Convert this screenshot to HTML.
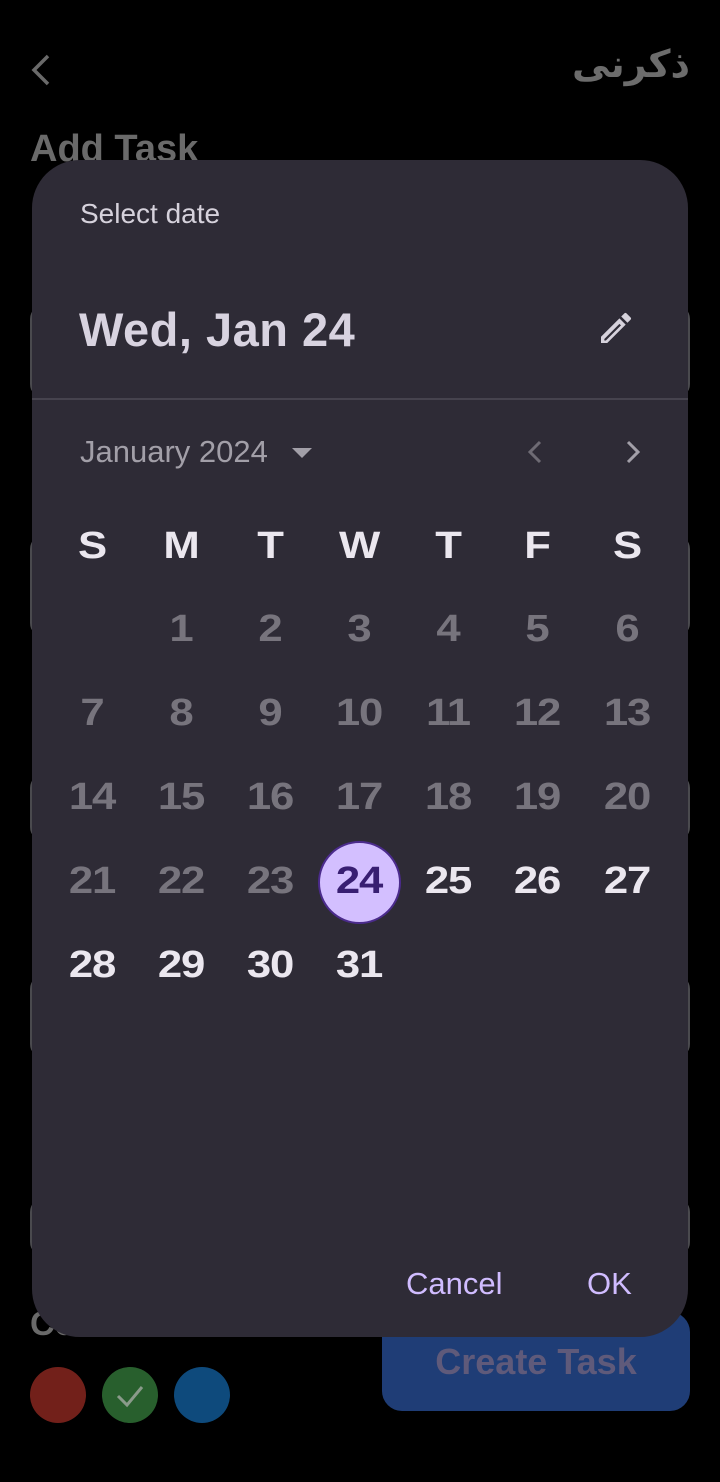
<!DOCTYPE html>
<html><head><meta charset="utf-8"><style>
*{margin:0;padding:0;box-sizing:border-box}
body{width:720px;height:1482px;background:#000;position:relative;overflow:hidden;font-family:"Liberation Sans",sans-serif}
.a{position:absolute}
.fld{position:absolute;left:30px;width:660px;border:2px solid #4a4a4e;border-radius:14px}
.dlg{position:absolute;left:32px;top:160px;width:656px;height:1177px;background:#2e2b36;border-radius:48px;overflow:hidden}
.n{position:absolute;width:90px;text-align:center;font-weight:900;font-size:38px;line-height:40px;letter-spacing:-1px;transform:scaleX(1.15)}
.g{color:#77747d}.w{color:#ebe7ef}
</style></head><body>
<svg class="a" style="left:26px;top:52px" width="28" height="36" viewBox="0 0 28 36"><path d="M22 4 L8 18 L22 32" stroke="#6a6a6a" stroke-width="3.5" fill="none"/></svg>
<div class="a" style="right:30px;top:42px;font-size:38px;font-weight:bold;color:#6c6c6c;font-family:'DejaVu Sans',sans-serif" dir="rtl">ذكرنى</div>
<div class="a" style="left:30px;top:128px;font-size:38px;font-weight:bold;color:#6a6a6a">Add Task</div>
<div class="fld" style="top:305px;height:93px"></div>
<div class="fld" style="top:535px;height:102px"></div>
<div class="fld" style="top:774px;height:67px"></div>
<div class="fld" style="top:975px;height:83px"></div>
<div class="fld" style="top:1198px;height:58px"></div>
<div class="a" style="left:30px;top:1305px;font-size:34px;font-weight:bold;color:#6a6a6a">Color</div>
<div class="a" style="left:30px;top:1367px;width:56px;height:56px;border-radius:50%;background:#72201a"></div>
<div class="a" style="left:102px;top:1367px;width:56px;height:56px;border-radius:50%;background:#285f2d"><svg width="56" height="56"><path d="M16 29 L25 38 L40 20" stroke="#8a9a8a" stroke-width="3" fill="none"/></svg></div>
<div class="a" style="left:174px;top:1367px;width:56px;height:56px;border-radius:50%;background:#0e4a7c"></div>
<div class="a" style="left:382px;top:1312px;width:308px;height:99px;border-radius:20px;background:#1f3d76;color:#5f5a7a;font-size:36px;font-weight:bold;text-align:center;line-height:99px">Create Task</div>

<div class="dlg">
<div class="a" style="left:48px;top:38px;font-size:28px;color:#d6d2dc">Select date</div>
<div class="a" style="left:47px;top:142px;font-size:47px;font-weight:bold;color:#d8d3e0;letter-spacing:0.5px">Wed, Jan 24</div>
<svg class="a" style="left:564px;top:148px" width="40" height="40" viewBox="0 0 24 24"><path d="M3 17.25V21h3.75L17.81 9.94l-3.75-3.75L3 17.25zM5.92 19.5H5v-.92l9.06-9.06.92.92L5.92 19.5zM20.71 5.63l-2.34-2.34a1 1 0 0 0-1.41 0l-1.83 1.83 3.75 3.75 1.83-1.83a1 1 0 0 0 0-1.41z" fill="#d6d2dc"/></svg>
<div class="a" style="left:0;top:238px;width:656px;height:2px;background:#46434e"></div>
<div class="a" style="left:48px;top:274px;font-size:31px;color:#a29fa8">January 2024</div>
<svg class="a" style="left:258px;top:284px" width="24" height="20"><path d="M2 4 L22 4 L12 14Z" fill="#a29fa8"/></svg>
<svg class="a" style="left:490px;top:278px" width="28" height="28"><path d="M18 4 L8 14 L18 24" stroke="#6e6b74" stroke-width="3" fill="none"/></svg>
<svg class="a" style="left:586px;top:278px" width="28" height="28"><path d="M10 4 L20 14 L10 24" stroke="#a29fa8" stroke-width="3" fill="none"/></svg>
<div class="a" style="left:286px;top:681px;width:83px;height:83px;border-radius:50%;background:#d3bfff;border:2px solid #4b2b8c"></div>
<div class="a" style="left:374px;top:1106px;font-size:31px;color:#d0bcff">Cancel</div>
<div class="a" style="left:555px;top:1106px;font-size:31px;color:#d0bcff">OK</div>
</div>
<script>
var cx=[60,149,238,327,416,505,595],g=document.querySelector('.dlg'),h='';
var hd=['S','M','T','W','T','F','S'];
hd.forEach(function(t,i){h+='<div class="n w" style="left:'+(cx[i]-45)+'px;top:366px">'+t+'</div>'});
var rows=[469,553,637,721,805];
for(var d=1;d<=31;d++){var p=d;var r=Math.floor(p/7),c=p%7;
var cls=d<24?'g':'w';var st=d==24?'color:#381e72;':'';
h+='<div class="n '+cls+'" style="left:'+(cx[c]-45)+'px;top:'+(rows[r]-20)+'px;'+st+'z-index:2">'+d+'</div>';}
var e=document.createElement('div');e.innerHTML=h;g.appendChild(e);
</script>
</body></html>
